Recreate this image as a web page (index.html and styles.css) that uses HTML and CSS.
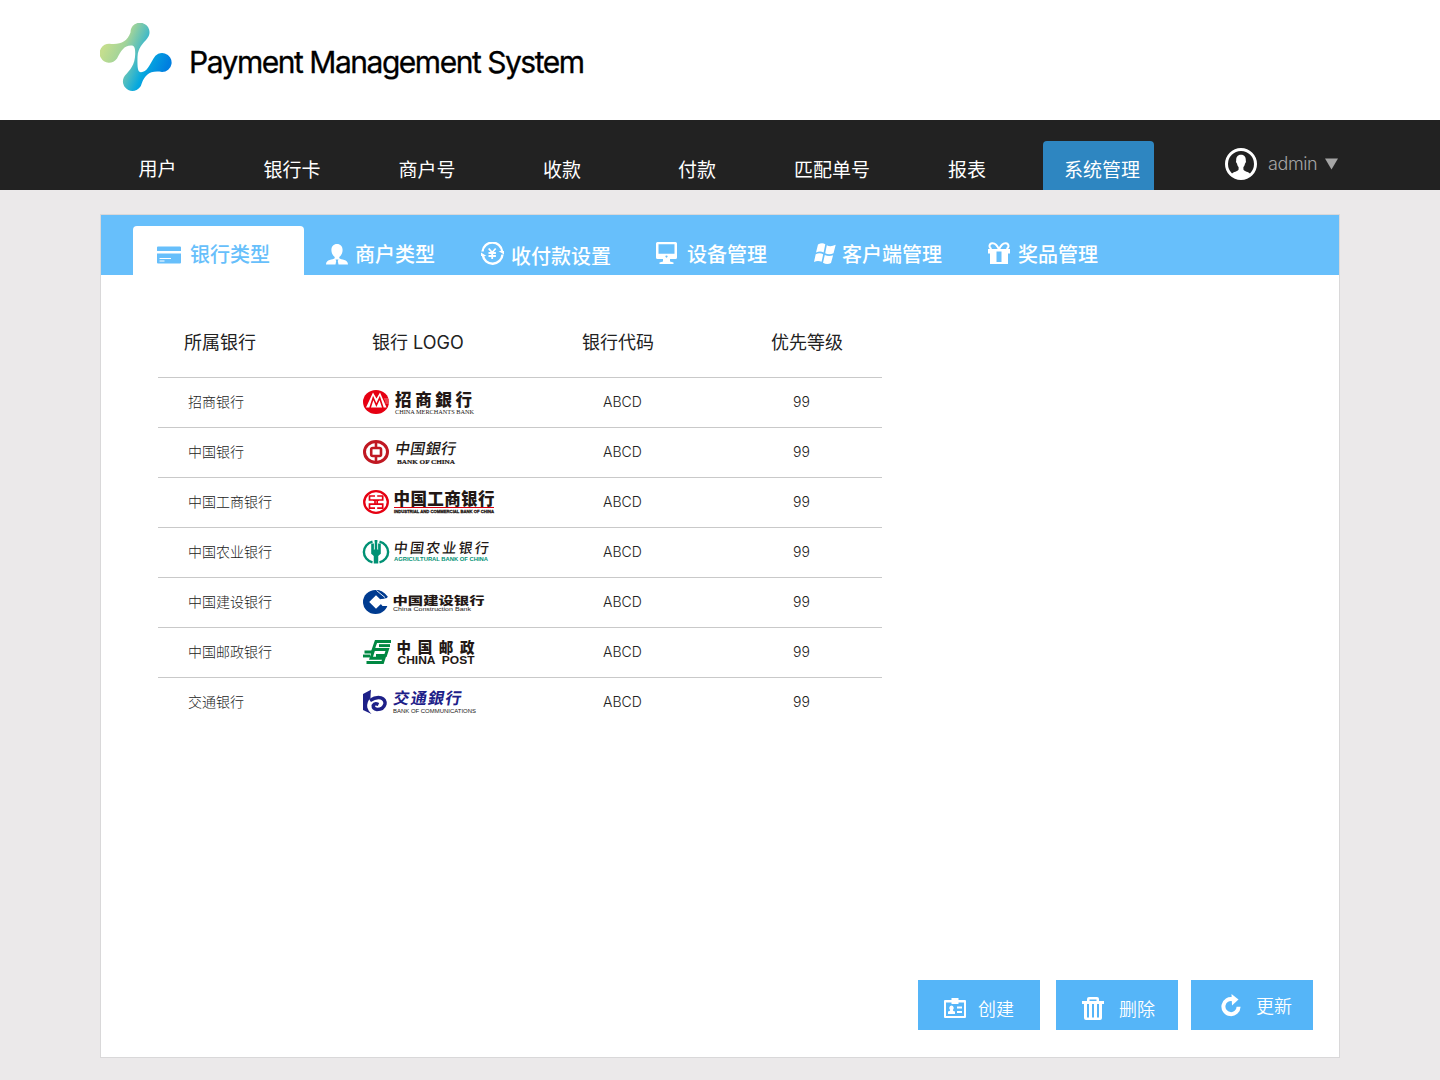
FILE: index.html
```html
<!DOCTYPE html>
<html lang="zh-CN">
<head>
<meta charset="utf-8">
<title>Payment Management System</title>
<link rel="stylesheet" href="styles.css">
</head>
<body>
<header class="header">
  <svg class="brand-mark" width="73" height="69" viewBox="0 0 73 69">
    <defs>
      <linearGradient id="brand" gradientUnits="userSpaceOnUse" x1="6" y1="20" x2="66" y2="46">
        <stop offset="0" stop-color="#c4de8e"/>
        <stop offset=".28" stop-color="#a0d39a"/>
        <stop offset=".5" stop-color="#52bec0"/>
        <stop offset=".7" stop-color="#06a8df"/>
        <stop offset="1" stop-color="#007fe0"/>
      </linearGradient>
    </defs>
    <path fill="url(#brand)" d="M9.300 20.700C20 22 27 19 30.500 9.500A9.500 9.500 0 1 1 47.500 15C43 21 38 24 37.500 34C37.300 44 37.500 49 41 49.200C47 49 49 43 53.500 35.500A9.500 9.500 0 1 1 62 49C50 47 45 52 41.700 60.500A9.500 9.500 0 1 1 25 52.500C30 47 35 42 35.200 31C35.300 24 34 22.600 31 22.600C24 22.600 21 28 17 35.500A9.500 9.500 0 1 1 9.300 20.700Z"/>
  </svg>
  <h1 class="brand-name">Payment Management System</h1>
</header>

<nav class="nav">
  <ul class="nav-list">
    <li class="nav-item nav-item-first">用户</li>
    <li class="nav-item">银行卡</li>
    <li class="nav-item">商户号</li>
    <li class="nav-item">收款</li>
    <li class="nav-item">付款</li>
    <li class="nav-item">匹配单号</li>
    <li class="nav-item">报表</li>
    <li class="nav-item nav-item-active">系统管理</li>
  </ul>
  <div class="user">
    <svg width="32" height="32" viewBox="0 0 32 32">
      <circle cx="16" cy="16" r="14.500" fill="none" stroke="#fff" stroke-width="3"/>
      <path fill="#fff" d="M16 6.800c-3.600 0-5 2.500-4.800 5.700-.5.800 0 2.500.8 3 .3 1.800.9 2.800 1.600 3.500v2.500c-1 2-5 2.200-7 4.500Q10.500 31 16 31t9.400-5c-2-2.300-6-2.500-7-4.500V19c.7-.7 1.300-1.700 1.600-3.500.8-.5 1.300-2.200.8-3C21 9.300 19.600 6.800 16 6.800z"/>
    </svg>
    <span class="user-name">admin</span>
    <svg class="user-caret" width="14" height="12" viewBox="0 0 14 12"><path fill="#a5a5a5" d="M0 .5h13L6.500 11.500z"/></svg>
  </div>
</nav>

<main class="panel">
  <ul class="tabs">
    <li class="tab tab-active">
      <svg width="24" height="18" viewBox="0 0 24 18"><path fill="#67bffb" d="M0 1.500Q0 .5 1 .5h22q1 0 1 1V5H0zM0 7.500h24V16.500q0 1-1 1H1q-1 0-1-1z"/><path stroke="#fff" d="M2.500 12.500h11.500M2.500 15h5"/></svg>
      <span>银行类型</span>
    </li>
    <li class="tab tab-merchant">
      <svg width="22" height="21" viewBox="0 0 22 21"><path fill="#fff" d="M11 0C7.500 0 5.400 2.500 5.400 6c0 3.200 1.500 5.500 3.300 7v1.200C7 16 0 15 0 20.500h9.500l.7-3.500-.7-1.500h3l-.7 1.500.7 3.500H22C22 15 15 16 13.300 14.200V13c1.800-1.500 3.300-3.800 3.300-7C16.600 2.500 14.500 0 11 0z"/></svg>
      <span>商户类型</span>
    </li>
    <li class="tab tab-payment">
      <svg width="23" height="23" viewBox="0 0 23 23"><g fill="none" stroke="#fff"><path stroke-width="2.400" d="M1.500 9.500A9.900 9.900 0 0 1 21.200 9.500M21.500 12.500A9.900 9.900 0 0 1 1.800 13"/><path stroke-width="1.800" d="M7.700 6.500l3.500 4L14.700 6.500M11.200 10v7M7.500 11h7.400M7.500 14h7.400"/></g><path fill="#fff" d="M17.500 9H23v3.500zM0 10.500V14h5.500z"/></svg>
      <span>收付款设置</span>
    </li>
    <li class="tab tab-device">
      <svg width="22" height="22" viewBox="0 0 22 22"><path fill="#fff" fill-rule="evenodd" d="M1.500 0h18q1.500 0 1.500 1.500v14q0 1.500-1.500 1.500H14v2.500l3.500 1V22h-14v-1.500l3.500-1V17H1.500Q0 17 0 15.500v-14Q0 0 1.500 0zM2.500 2.200v9.600h16V2.200zM10.500 13.500a1 1 0 1 0 .01 0z"/></svg>
      <span>设备管理</span>
    </li>
    <li class="tab tab-client">
      <svg width="22" height="21" viewBox="0 0 22 21"><path fill="#fff" d="M4 1.500Q8-.7 11.300 1.200L9.600 9.400Q6 7.700 2 9.500zM12.800 2.300Q16.500 4.300 21.700 1.800L19.500 10.300Q15 12.300 11.200 10.200zM1.700 11.200Q5.500 9.300 9.200 11.200L7.600 18.800Q4 17 0 18.900zM10.800 12Q15 13.800 19.100 12.200L17 20Q13 22 9 19.700z"/></svg>
      <span>客户端管理</span>
    </li>
    <li class="tab tab-gift">
      <svg width="22" height="22" viewBox="0 0 22 22"><path fill="none" stroke="#fff" stroke-width="2" d="M11 7.500C9 2.500 6.500 1 4.200 1.200 1 1.500.5 5.500 3.500 7M11 7.500c2-5 4.500-6.500 6.800-6.300 3.200.3 3.700 4.300.7 5.800"/><path fill="#fff" fill-rule="evenodd" d="M0 7h22v4.500H20V22H2V11.500H0zM8.500 9.500V20h5V9.500z"/></svg>
      <span>奖品管理</span>
    </li>
  </ul>

  <div class="table">
    <div class="row row-head"><span>所属银行</span><span>银行 LOGO</span><span>银行代码</span><span>优先等级</span></div>
    <div class="row">
      <span>招商银行</span>
      <svg class="logo" viewBox="0 0 140 28">
        <ellipse cx="13" cy="14" rx="13" ry="12" fill="#e60012"/>
        <path fill="#fff" d="M3 19.500L10 4.500L13.500 10.500L17 4.500L23.500 19.500z"/>
        <path fill="none" stroke="#e60012" stroke-width="1.600" d="M7 20L10.200 10L13.400 17L16.700 10L20 20"/>
        <path stroke="#fff" stroke-width=".5" d="M21 11h4.500M22 13h4M22.500 15h3.500"/>
        <text class="cn heavy" x="32" y="18" font-size="16.500" textLength="77">招商銀行</text>
        <text class="serif" x="32" y="25.500" font-size="6" textLength="79" lengthAdjust="spacingAndGlyphs">CHINA MERCHANTS BANK</text>
      </svg>
      <span class="code">ABCD</span><span class="rank">99</span>
    </div>
    <div class="row">
      <span>中国银行</span>
      <svg class="logo" viewBox="0 0 140 28">
        <g fill="none" stroke="#c01822"><ellipse cx="13" cy="14" rx="11.500" ry="10.500" stroke-width="3"/><rect x="8.200" y="10" width="9.800" height="8" rx="1.500" stroke-width="2.600"/><path stroke-width="2.600" d="M13 3v6.500M13 18.500V25"/></g>
        <text class="cn brush" x="30" y="15.800" font-size="15" textLength="61" transform="translate(4 0) skewX(-10)">中国銀行</text>
        <text class="serif" x="34" y="25.600" font-size="6.500" font-weight="700" textLength="58" lengthAdjust="spacingAndGlyphs" stroke="#231815" stroke-width=".2">BANK OF CHINA</text>
      </svg>
      <span class="code">ABCD</span><span class="rank">99</span>
    </div>
    <div class="row">
      <span>中国工商银行</span>
      <svg class="logo" viewBox="0 0 140 28">
        <g fill="none" stroke="#e60012"><ellipse cx="13" cy="14" rx="11.800" ry="10.900" stroke-width="2.300"/><path stroke-width="1.700" d="M12 8H6.500v4H12v4.200H6.500v4H12M14.200 8h5.500v4h-5.500v4.200h5.500v4h-5.500M10 12.100h6M10 16.100h6"/></g>
        <text class="cn heavy" x="30.500" y="16.500" font-size="16.500" textLength="101">中国工商银行</text>
        <path stroke="#d7000f" stroke-width="1" d="M31 19.500h100"/>
        <text class="latin heavy" x="31" y="24.800" font-size="4.200" textLength="100" lengthAdjust="spacingAndGlyphs" stroke="#231815" stroke-width=".3">INDUSTRIAL AND COMMERCIAL BANK OF CHINA</text>
      </svg>
      <span class="code">ABCD</span><span class="rank">99</span>
    </div>
    <div class="row">
      <span>中国农业银行</span>
      <svg class="logo" viewBox="0 0 140 28">
        <g fill="none" stroke="#009174"><path stroke-width="2.400" d="M9.500 3.600A11.800 10.800 0 0 0 9.500 24.400M16.500 3.600A11.800 10.800 0 0 1 16.500 24.400"/><path stroke-width="2.800" d="M9.600 5.500v9.500L13 18l3.400-3v-9.500M13 2v10"/><path stroke-width="4.500" d="M13 11v14.500"/></g>
        <path stroke="#fff" stroke-width=".5" fill="none" d="M11.300 4v8M14.700 4v8"/>
        <text class="cn brush" x="30" y="14.700" font-size="14" textLength="95" transform="translate(2 0) skewX(-7)">中国农业银行</text>
        <text class="latin green" x="31" y="23.300" font-size="5" font-weight="700" textLength="94" lengthAdjust="spacingAndGlyphs">AGRICULTURAL BANK OF CHINA</text>
      </svg>
      <span class="code">ABCD</span><span class="rank">99</span>
    </div>
    <div class="row">
      <span>中国建设银行</span>
      <svg class="logo" viewBox="0 0 140 28">
        <ellipse cx="12.500" cy="14" rx="12.500" ry="12" fill="#003b90"/>
        <path fill="#fff" d="M13 7.200L20 14l-7 6.800L6.200 14zM17 11.200L27 9.500V18H19.500L17 15z"/>
        <path fill="#003b90" d="M13.500 2.100Q19 1.700 25 9L19.500 10.800L12 4z"/>
        <path fill="none" stroke="#fff" stroke-width=".9" d="M13.500 2.500L22 9.500"/>
        <text class="cn heavy" font-size="13" textLength="92" lengthAdjust="spacingAndGlyphs" transform="translate(29.500 16.800) scale(1 .86)">中国建设银行</text>
        <text class="latin" x="30" y="22.800" font-size="6" textLength="78" lengthAdjust="spacingAndGlyphs">China Construction Bank</text>
      </svg>
      <span class="code">ABCD</span><span class="rank">99</span>
    </div>
    <div class="row">
      <span>中国邮政银行</span>
      <svg class="logo" viewBox="0 0 140 28">
        <g fill="none" stroke="#008842" stroke-width="2.900"><path d="M28 3.500H13L10.200 11.500H24.500L22.500 17.500H13"/><path d="M27 7.600H16"/><path d="M1.500 14h8.500l-2 6.300H21L19.600 24.500H3.500"/><path d="M0 18h7"/></g>
        <text class="cn heavy" x="33.500" y="14.600" font-size="14.500" textLength="78">中国邮政</text>
        <text class="latin heavy" x="34.500" y="26" font-size="10" textLength="77" lengthAdjust="spacingAndGlyphs" xml:space="preserve">CHINA  POST</text>
      </svg>
      <span class="code">ABCD</span><span class="rank">99</span>
    </div>
    <div class="row">
      <span>交通银行</span>
      <svg class="logo" viewBox="0 0 140 28">
        <path fill="#1d2088" d="M0 6L8 1.800Q7.500 6 7.500 10Q3.500 14 4.300 19.500Q5.500 23.500 8.500 26L0 22z"/>
        <path fill="none" stroke="#1d2088" stroke-width="3.400" d="M7 12.500Q13 8.500 18 9.800Q22.500 11.500 22 16Q20.500 21.500 14 21.500Q10 20.800 10.200 17.500Q11.500 14.800 15.500 16.500"/>
        <text class="cn navy" x="30" y="16.300" font-size="16" textLength="68" transform="translate(2.500 0) skewX(-10)">交通銀行</text>
        <text class="latin" x="30" y="24.800" font-size="5" textLength="83" lengthAdjust="spacingAndGlyphs">BANK OF COMMUNICATIONS</text>
      </svg>
      <span class="code">ABCD</span><span class="rank">99</span>
    </div>
  </div>

  <div class="actions">
    <button class="button button-create">
      <svg width="22" height="20" viewBox="0 0 22 20"><path fill="#fff" fill-rule="evenodd" d="M7.500 0h7v2H21q1 0 1 1v16q0 1-1 1H1q-1 0-1-1V3q0-1 1-1h6.500zM2 4.500V18h18V4.500h-5.500V6h-7V4.500z"/><path fill="#fff" d="M7.500 7.500a2.300 2.500 0 0 1 1.300 4.500q0 1.300 2.200 1.500v2.500H4v-2.500q2.200-.2 2.200-1.500A2.300 2.500 0 0 1 7.500 7.500zM13 8.500h5v2h-5zM13 13h5v2h-5z"/></svg>
      <span>创建</span>
    </button>
    <button class="button button-delete">
      <svg width="22" height="23" viewBox="0 0 22 23"><path fill="#fff" fill-rule="evenodd" d="M5 4V2q0-2 2-2h8q2 0 2 2v2h5v3h-2v14q0 2-2 2H4q-2 0-2-2V7H0V4zM7.500 2.500V4h7V2.500zM5 7v13.500h2V7zM10 7v13.500h2V7zM15 7v13.500h2V7z"/></svg>
      <span>删除</span>
    </button>
    <button class="button button-refresh">
      <svg width="20" height="23" viewBox="0 0 20 23"><path fill="none" stroke="#fff" stroke-width="4" d="M12 5.200A7.600 7.600 0 1 0 17.600 12.800"/><path fill="#fff" d="M10.500 0L17.500 5.500l-6.500 6z"/></svg>
      <span>更新</span>
    </button>
  </div>
</main>
</body>
</html>
```
FILE: styles.css
```css
* { box-sizing: border-box; }

body {
  margin: 0;
  height: 1080px;
  display: flex;
  flex-direction: column;
  background: #ebe9ea;
  color: #222;
  font-family: Inter, "Noto Sans CJK SC", sans-serif;
}

ul { margin: 0; padding: 0; list-style: none; }
svg { display: block; flex: none; }

.header {
  height: 120px;
  padding: 23px 100px 0;
  display: flex;
  align-items: flex-start;
  gap: 16px;
  background: #fff;
}

.brand-name {
  margin: 20px 0 0;
  font-size: 30px;
  line-height: 38px;
  font-weight: 400;
  letter-spacing: -1.48px;
  white-space: nowrap;
  color: #000;
  -webkit-text-stroke: .3px #000;
}

.nav {
  height: 70px;
  padding-left: 90px;
  display: flex;
  background: #222;
}

.nav-list {
  width: 1080px;
  display: grid;
  grid-template-columns: repeat(8, 135px);
  align-items: end;
}

.nav-item {
  height: 49px;
  padding: 13px 1px 0 0;
  font-family: "Noto Sans CJK SC", sans-serif;
  font-size: 19px;
  line-height: 30px;
  text-align: center;
  color: #fff;
}

.nav-item-first { padding: 12px 0 0; }

.nav-item-active {
  width: 111px;
  margin-left: 8px;
  padding: 13px 0 0 7px;
  border-radius: 4px 4px 0 0;
  background: #2e86c1;
}

.user {
  height: 32px;
  margin: 28px 0 0 55px;
  display: flex;
  align-items: center;
}

.user-name {
  width: 57px;
  margin-left: 11px;
  padding-bottom: 1px;
  font-size: 18px;
  font-weight: 300;
  letter-spacing: -.4px;
  color: #a5a5a5;
}

.panel {
  width: 1240px;
  height: 844px;
  margin: 24px 100px 0;
  display: flex;
  flex-direction: column;
  border: 1px solid #d9d8d9;
  background: #fff;
}

.tabs {
  height: 60px;
  padding: 11px 0 0 32px;
  display: flex;
  background: #67bffb;
}

.tab {
  height: 49px;
  display: flex;
  align-items: flex-start;
  font-family: "Noto Sans CJK SC", sans-serif;
  font-size: 20px;
  line-height: 30px;
  font-weight: 500;
  color: #fff;
  white-space: nowrap;
}

.tab span { margin-top: 13px; }

.tab-active {
  width: 171px;
  padding-left: 24px;
  gap: 9px;
  border-radius: 4px 4px 0 0;
  background: #fff;
  color: #67bffb;
}
.tab-active svg { margin-top: 20px; }

.tab-merchant { margin-left: 22px; gap: 7px; }
.tab-merchant svg { margin-top: 18px; }
.tab-payment { margin-left: 46px; gap: 7px; }
.tab-payment svg { margin-top: 16px; }
.tab-payment span { margin-top: 15px; }
.tab-device { margin-left: 45px; gap: 9px; }
.tab-device svg { margin-top: 16px; }
.tab-client { margin-left: 47px; gap: 6px; }
.tab-client svg { margin-top: 17px; }
.tab-gift { margin-left: 46px; gap: 8px; }
.tab-gift svg { margin-top: 16px; }

.table {
  width: 724px;
  margin: 32px 0 0 57px;
}

.row {
  height: 50px;
  padding-bottom: 1px;
  display: grid;
  grid-template-columns: 205px 218px 190px 111px;
  align-items: center;
  border-bottom: 1px solid #c9c9c9;
  font-size: 14px;
  font-weight: 300;
}

.row:last-child { border-bottom-color: transparent; }
.row > span:first-child { padding: 0 0 2px 30px; }

.row-head {
  height: 71px;
  padding-bottom: 2px;
  font-size: 18px;
  font-weight: 400;
}

.row-head > span:first-child { padding: 0 0 0 26px; }
.row-head > span:nth-child(2) { padding-left: 9px; }
.row-head > span:nth-child(3) { padding-left: 1px; }

.code, .rank { padding: 0 0 2px 22px; }

.logo { width: 140px; height: 28px; overflow: visible; }
.logo text { fill: #231815; }
.cn { font-family: "Noto Sans CJK SC", sans-serif; }
.serif { font-family: "Liberation Serif", serif; }
.latin { font-family: "Liberation Sans", sans-serif; }
.heavy { font-weight: 900; }
.brush { font-weight: 500; }
.logo .green { fill: #009174; }
.logo .navy { fill: #1d2088; font-weight: 700; }

.actions {
  margin: auto 26px 27px;
  display: flex;
  justify-content: flex-end;
}

.button {
  width: 122px;
  height: 50px;
  padding: 0;
  display: flex;
  align-items: flex-start;
  border: 0;
  background: #55b5f8;
  color: #fff;
  font-family: "Noto Sans CJK SC", sans-serif;
  font-size: 18px;
  line-height: 26px;
  font-weight: 350;
}

.button-create { padding: 18px 0 0 26px; gap: 12px; }
.button-create span { margin-top: -3px; }
.button-delete { margin-left: 16px; padding: 17px 0 0 26px; gap: 15px; }
.button-delete span { margin-top: -2px; }
.button-refresh { margin-left: 13px; padding: 14px 0 0 30px; gap: 15px; }
.button-refresh span { margin-top: -2px; }
```
